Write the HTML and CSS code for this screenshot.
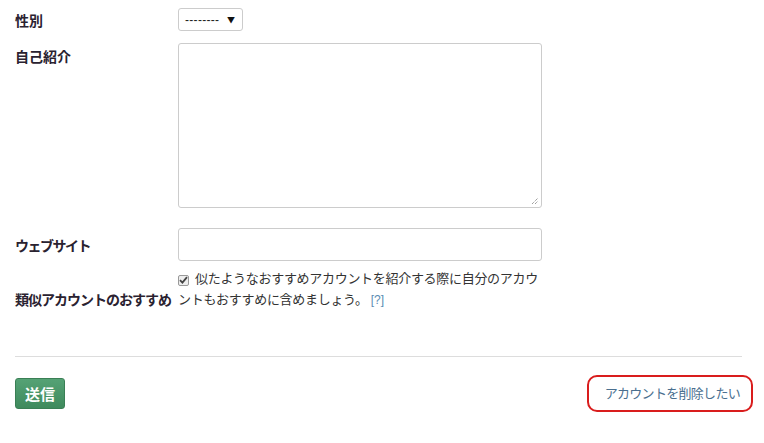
FILE: index.html
```html
<!DOCTYPE html>
<html lang="ja">
<head>
	<meta charset="utf-8" />
	<title>アカウント設定</title>
	<link rel="stylesheet" href="styles.css">
</head>
<body>
    <form class="settings">
        <div class="row row-sex">
            <label class="lbl">性別</label>
            <div class="field">
                <div class="select">
                    <span class="select-text">--------</span>
                    <span class="select-arrow">&#9660;</span>
                </div>
            </div>
        </div>

        <div class="row row-top">
            <label class="lbl lbl-top">自己紹介</label>
            <div class="field">
                <div class="textarea">
                    <svg class="grip" width="8" height="8" viewBox="0 0 8 8">
                        <path d="M1 7 L7 1 M4 7 L7 4" stroke="#777" stroke-width="1" stroke-dasharray="1 1" fill="none"/>
                    </svg>
                </div>
            </div>
        </div>

        <div class="row row-web">
            <label class="lbl lbl-kana">ウェブサイト</label>
            <div class="field">
                <div class="input"></div>
            </div>
        </div>

        <div class="row row-check">
            <label class="lbl lbl-long">類似アカウントのおすすめ</label>
            <div class="field check-text">
                <div class="check-line">
                    <span class="checkbox">
                        <svg width="9" height="8" viewBox="0 0 9 8">
                            <path d="M1 4.2 L3.4 6.6 L8 1.2" stroke="#444" stroke-width="1.8" fill="none"/>
                        </svg>
                    </span><span>似たようなおすすめアカウントを紹介する際に自分のアカウ</span>
                </div>
                <div class="check-line">
                    <span>ントもおすすめに含めましょう。</span><a class="help" href="#">[?]</a>
                </div>
            </div>
        </div>

        <hr class="sep">

        <div class="actions">
            <button class="btn-submit" type="button">送信</button>
            <span class="delete-wrap"><a class="delete" href="#">アカウントを削除したい</a></span>
        </div>
    </form>
</body>
</html>
```

FILE: styles.css
```css
body {
    margin:0;
    background:#fff;
    color:#333;
    font-family:"Noto Sans CJK JP", "Noto Sans", sans-serif;
    font-size:13px;
}

.settings {
    padding:8px 22px 0 15px;
}

.row {
    display:flex;
    align-items:center;
}
.row-top {
    align-items:flex-start;
    margin-top:12px;
}
.row-web {
    margin-top:20px;
}
.row-check {
    align-items:flex-end;
    margin-top:6px;
}

.lbl {
    width:163px;
    flex:none;
    font-weight:bold;
    font-size:14px;
    color:#2a2230;
    white-space:nowrap;
}
.lbl-top {
    padding-top:3px;
}
.lbl-kana {
    letter-spacing:-1.5px;
}
.lbl-long {
    letter-spacing:-1px;
}
.row-check .lbl {
    line-height:21px;
    margin-bottom:1px;
}

/* select box */
.select {
    display:flex;
    align-items:center;
    width:63px;
    height:21px;
    border:1px solid #ccc;
    border-radius:3px;
    background:#fff;
}
.select-text {
    margin-left:6px;
    font-family:"Liberation Sans", sans-serif;
    font-size:12px;
    letter-spacing:.3px;
    color:#222;
}
.select-arrow {
    margin-left:auto;
    margin-right:7px;
    font-size:8px;
    color:#111;
}

.textarea {
    position:relative;
    width:362px;
    height:163px;
    border:1px solid #ccc;
    border-radius:3px;
    background:#fff;
}
.grip {
    position:absolute;
    right:2px;
    bottom:2px;
}

.input {
    width:362px;
    height:31px;
    border:1px solid #ccc;
    border-radius:3px;
    background:#fff;
}

.check-text {
    width:364px;
    line-height:21px;
    color:#333;
    letter-spacing:-.3px;
}
.check-line {
    white-space:nowrap;
}
.checkbox {
    display:inline-flex;
    align-items:center;
    justify-content:center;
    width:11px;
    height:11px;
    margin:0 6px 0 0;
    border:1px solid #999;
    border-radius:2px;
    background:#eee;
    vertical-align:-1px;
    box-sizing:border-box;
}
.help {
    color:#5b8cb3;
    text-decoration:none;
    font-family:"Liberation Sans", sans-serif;
    font-size:12px;
    letter-spacing:0;
    margin-left:3px;
}

.sep {
    border:0;
    border-top:1px solid #ddd;
    margin:45px 0 0;
}

.actions {
    display:flex;
    justify-content:space-between;
    align-items:center;
    margin-top:18px;
}

.btn-submit {
    width:50px;
    height:31px;
    border:1px solid #3a7f55;
    border-radius:3px;
    background:linear-gradient(#55a275, #3f8a5d);
    color:#fff;
    font-family:inherit;
    font-weight:bold;
    font-size:15px;
    padding:0;
}

/* red annotation around delete link */
.delete-wrap {
    display:inline-block;
    margin-right:-11px;
    padding:6px 11px 8px 16px;
    border:2px solid #d91d1d;
    border-radius:10px;
}
.delete {
    color:#4a6f8f;
    text-decoration:none;
    font-size:13px;
    letter-spacing:-.7px;
}
```
